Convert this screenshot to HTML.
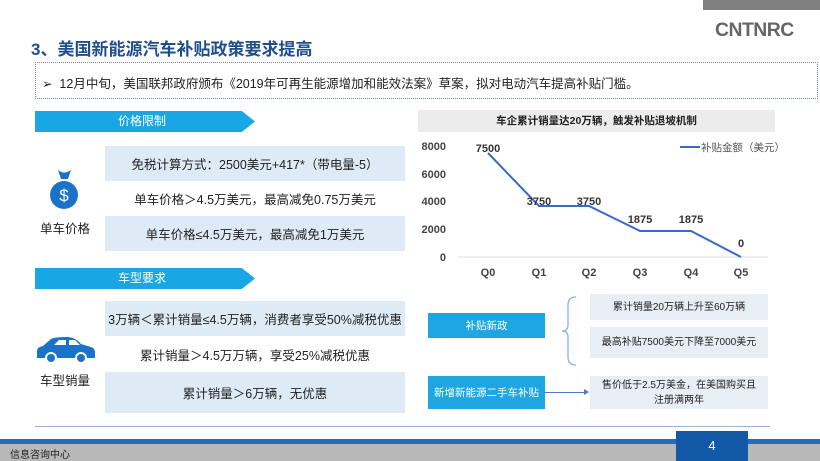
<!DOCTYPE html>
<html><head><meta charset="utf-8"><style>
*{margin:0;padding:0;box-sizing:border-box}
body{width:820px;height:461px;position:relative;overflow:hidden;background:#fff;font-family:"Liberation Sans","Noto Sans CJK SC",sans-serif;color:#222}
.a{position:absolute}
.banner{background:#18a7e4;color:#fff;font-size:12px;height:21px;line-height:21px;clip-path:polygon(0 0,94% 0,100% 50%,94% 100%,0 100%)}
.row{position:absolute;left:105px;width:300px;display:flex;align-items:center;justify-content:center;font-size:12.5px}
.lb{background:#deebf7}
.bb{position:absolute;background:#1ea6e2;color:#fff;font-size:10.5px;display:flex;align-items:center;justify-content:center}
.gb{position:absolute;background:#e8eef6;font-size:10px;display:flex;align-items:center;justify-content:center;text-align:center;line-height:15px}
</style></head><body>
<div class="a" style="left:703px;top:0;width:117px;height:10px;background:#808080"></div>
<div class="a" style="left:715px;top:20px;font-size:19px;font-weight:900;color:#666;letter-spacing:-0.5px;transform:scaleX(1.02);transform-origin:left">CNTNRC</div>
<div class="a" style="left:31px;top:35px;font-size:17px;font-weight:bold;color:#1f4e8c">3、美国新能源汽车补贴政策要求提高</div>
<div class="a" style="left:35px;top:62px;width:783px;height:37px;border:1px dotted #6f84b8"></div>
<div class="a" style="left:42px;top:73px;font-size:12.5px">➢&nbsp;&nbsp;12月中旬，美国联邦政府颁布《2019年可再生能源增加和能效法案》草案，拟对电动汽车提高补贴门槛。</div>
<div class="a banner" style="left:35px;top:111px;width:220px;padding-left:83px">价格限制</div>
<div class="row lb" style="top:146px;height:35px">免税计算方式：2500美元+417*（带电量-5）</div>
<div class="row" style="top:181px;height:35px">单车价格＞4.5万美元，最高减免0.75万美元</div>
<div class="row lb" style="top:216px;height:35px">单车价格≤4.5万美元，最高减免1万美元</div>
<svg class="a" style="left:48px;top:168px" width="32" height="42" viewBox="0 0 32 42"><path d="M10 2 Q16 7 23 2 L20 11 L13 11Z" fill="#1a73c8"/><circle cx="16" cy="27" r="14" fill="#1a73c8"/><text x="16" y="33" font-size="17" fill="#fff" text-anchor="middle" font-family="Liberation Sans">$</text></svg>
<div class="a" style="left:40px;top:218px;font-size:12.5px">单车价格</div>
<div class="a banner" style="left:35px;top:268px;width:220px;padding-left:83px">车型要求</div>
<div class="row lb" style="top:301px;height:35px">3万辆＜累计销量≤4.5万辆，消费者享受50%减税优惠</div>
<div class="row" style="top:336px;height:36px">累计销量＞4.5万万辆，享受25%减税优惠</div>
<div class="row lb" style="top:372px;height:41px">累计销量＞6万辆，无优惠</div>
<svg class="a" style="left:35px;top:336px" width="62" height="30" viewBox="0 0 62 30"><path d="M2 22 L2 15 Q2 11 8 10 L16 3 Q20 1 32 1 Q40 1 46 8 L56 11 Q60 12 60 17 L60 22Z" fill="#1a73c8"/><path d="M19 9 L24 4 L31 4 L31 9Z M34 4 L40 4 L45 9 L34 9Z" fill="#fff"/><circle cx="16" cy="22" r="6" fill="#fff"/><circle cx="16" cy="22" r="4" fill="#1a73c8"/><circle cx="46" cy="22" r="6" fill="#fff"/><circle cx="46" cy="22" r="4" fill="#1a73c8"/></svg>
<div class="a" style="left:40px;top:370px;font-size:12.5px">车型销量</div>
<div class="a" style="left:418px;top:110px;width:357px;height:22px;background:#ececec;font-size:10.5px;font-weight:bold;text-align:center;line-height:22px">车企累计销量达20万辆，触发补贴退坡机制</div>
<svg class="a" style="left:410px;top:135px" width="370" height="150" font-family="Liberation Sans" font-size="11" font-weight="bold" fill="#444">
<text x="36" y="15" text-anchor="end">8000</text><text x="36" y="43" text-anchor="end">6000</text><text x="36" y="70" text-anchor="end">4000</text><text x="36" y="98" text-anchor="end">2000</text><text x="36" y="126" text-anchor="end">0</text>
<line x1="48" y1="122" x2="358" y2="122" stroke="#ddd"/>
<polyline points="78,18 129,71 179,71 230,96 281,96 331,122" fill="none" stroke="#3a6bc4" stroke-width="2"/>
<text x="78" y="17" text-anchor="middle" fill="#333">7500</text><text x="129" y="70" text-anchor="middle" fill="#333">3750</text><text x="179" y="70" text-anchor="middle" fill="#333">3750</text><text x="230" y="88" text-anchor="middle" fill="#333">1875</text><text x="281" y="88" text-anchor="middle" fill="#333">1875</text><text x="331" y="112" text-anchor="middle" fill="#333">0</text>
<g text-anchor="middle"><text x="78" y="141">Q0</text><text x="129" y="141">Q1</text><text x="179" y="141">Q2</text><text x="230" y="141">Q3</text><text x="281" y="141">Q4</text><text x="331" y="141">Q5</text></g>
<line x1="270" y1="12" x2="290" y2="12" stroke="#3a6bc4" stroke-width="2"/><text x="291" y="16" font-weight="normal" font-size="10.5" fill="#555">补贴金额（美元）</text>
</svg>
<div class="bb" style="left:428px;top:313px;width:117px;height:25px">补贴新政</div>
<div class="bb" style="left:428px;top:376px;width:117px;height:33px">新增新能源二手车补贴</div>
<svg class="a" style="left:560px;top:295px" width="32" height="120"><path d="M16 2 Q8 2 8 10 L8 30 Q8 36 2 36 Q8 36 8 42 L8 62 Q8 70 16 70" fill="none" stroke="#8ab0dc" stroke-width="1.3"/></svg>
<div class="gb" style="left:590px;top:294px;width:178px;height:26px">累计销量20万辆上升至60万辆</div>
<div class="gb" style="left:590px;top:327px;width:178px;height:31px">最高补贴7500美元下降至7000美元</div>
<div class="a" style="left:545px;top:392px;width:42px;height:1px;background:#4a7ac8"></div>
<div class="a" style="left:584px;top:389px;border-left:5px solid #4a7ac8;border-top:3px solid transparent;border-bottom:3px solid transparent"></div>
<div class="gb" style="left:590px;top:376px;width:178px;height:33px">售价低于2.5万美金，在美国购买且<br>注册满两年</div>
<div class="a" style="left:35px;top:426px;width:735px;height:1px;background:#9ab0d6"></div>
<div class="a" style="left:0;top:439px;width:820px;height:5px;background:#1c6fc0"></div>
<div class="a" style="left:0;top:444px;width:820px;height:17px;background:#b8b8b8"></div>
<div class="a" style="left:10px;top:446px;font-size:10px;color:#222">信息咨询中心</div>
<div class="a" style="left:676px;top:431px;width:72px;height:30px;background:#1259a8;color:#fff;font-size:13px;text-align:center;line-height:30px">4</div>
</body></html>
